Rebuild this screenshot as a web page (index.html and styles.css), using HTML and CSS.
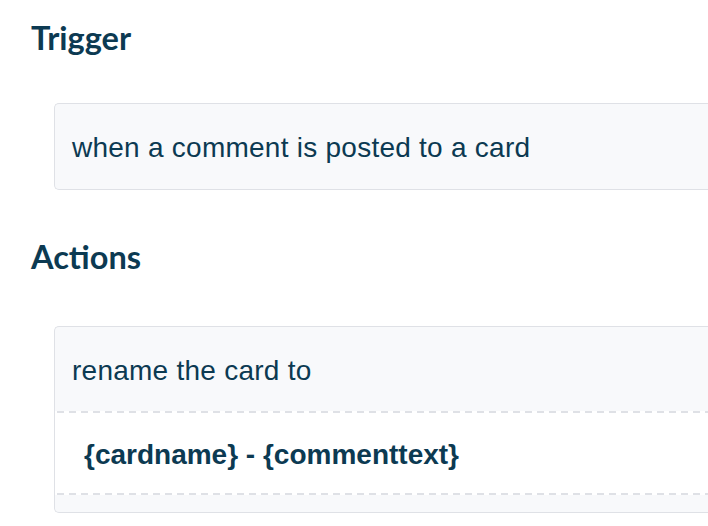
FILE: index.html
```html
<!DOCTYPE html>
<html>
<head>
<meta charset="utf-8">
<link rel="stylesheet" href="styles.css">
</head>
<body>
<div class="page">
  <h2 class="section-title title-trigger">Trigger</h2>
  <div class="card card-trigger">
    <div class="card-row">when a comment is posted to a card</div>
  </div>
  <h2 class="section-title title-actions">Actions</h2>
  <div class="card card-action">
    <div class="card-row">rename the card to</div>
    <div class="card-value">
      <span class="value-text">{cardname} - {commenttext}</span>
    </div>
    <div class="card-foot"></div>
  </div>
</div>
</body>
</html>
```

FILE: styles.css
```css
html, body {
  margin: 0;
  padding: 0;
  background: #ffffff;
}

.page {
  padding: 18px 0 0 31px;
  color: #0c3a52;
}

.section-title {
  margin: 0;
  font-family: Lato, "Noto Sans", sans-serif;
  font-weight: 700;
  font-size: 32.5px;
  line-height: 40px;
  color: #0c3a52;
}

.title-actions {
  margin-top: 47px;
}

.card {
  margin-left: 23px;
  border: 1px solid #dfe1e6;
  border-right: none;
  border-radius: 5px 0 0 5px;
  background: #f8f9fb;
  font-family: "Liberation Sans", Arial, sans-serif;
  font-size: 28px;
  line-height: 32px;
  color: #0c3a52;
}

.card-trigger {
  margin-top: 45px;
}

.card-action {
  margin-top: 49px;
}

.card-row {
  padding: 28px 17px 25px;
  letter-spacing: 0.25px;
}

.card-action .card-row {
  padding-bottom: 24px;
}

.card-value {
  position: relative;
  background: #ffffff;
  padding: 28px 29px 24px;
  font-weight: 700;
}

.card-value::before,
.card-value::after {
  content: "";
  position: absolute;
  left: 2px;
  right: 0;
  height: 2px;
  background: repeating-linear-gradient(90deg, #dfe1e6 0 7px, transparent 7px 12px);
}

.card-value::before {
  top: 0;
}

.card-value::after {
  bottom: 0;
}

.card-foot {
  height: 17px;
}
```
